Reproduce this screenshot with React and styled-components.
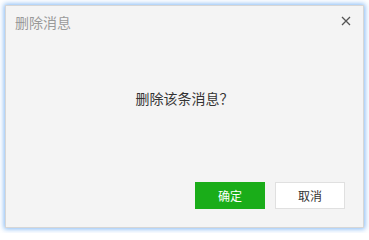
import React from 'react';
import styled, { createGlobalStyle } from 'styled-components';

const GlobalStyle = createGlobalStyle`
  html, body {
    margin: 0;
    padding: 0;
    background: #ffffff;
  }
  body {
    font-family: "Microsoft YaHei", "Noto Sans CJK SC", "Noto Sans", sans-serif;
  }
`;

const Page = styled.div`
  padding: 5px;
`;

const Dialog = styled.div`
  width: 359px;
  height: 223px;
  box-sizing: border-box;
  background-color: #f4f4f4;
  border: 1px solid #d6d6d6;
  box-shadow: 0 0 5px 1px rgba(90, 160, 240, 0.75);
  display: flex;
  flex-direction: column;
`;

const Header = styled.div`
  height: 32px;
  display: flex;
  align-items: center;
  justify-content: space-between;
  padding: 0 9px 0 9px;
  box-sizing: border-box;
`;

const Title = styled.span`
  font-size: 14px;
  color: #9a9a9a;
  line-height: 20px;
  margin-top: -1px;
`;

const CloseButton = styled.button`
  border: none;
  background: none;
  padding: 0;
  width: 16px;
  height: 16px;
  display: flex;
  align-items: center;
  justify-content: center;
  cursor: pointer;
  margin-top: -2px;
`;

const Body = styled.div`
  flex: 1;
  display: flex;
  justify-content: center;
  padding-top: 50px;
`;

const Message = styled.p`
  margin: 0;
  font-size: 14px;
  line-height: 20px;
  color: #333333;
`;

const Footer = styled.div`
  display: flex;
  justify-content: flex-end;
  gap: 10px;
  padding: 0 18px 18px 0;
`;

const Button = styled.button`
  width: 70px;
  height: 27px;
  box-sizing: border-box;
  font-family: inherit;
  font-size: 12px;
  cursor: pointer;
  border: 1px solid ${p => (p.$primary ? '#1aad19' : '#e0e0e0')};
  background-color: ${p => (p.$primary ? '#1aad19' : '#ffffff')};
  color: ${p => (p.$primary ? '#ffffff' : '#333333')};
  padding: 0;
`;

const App = () => {
  return (
    <>
      <GlobalStyle />
      <Page>
        <Dialog>
          <Header>
            <Title>删除消息</Title>
            <CloseButton aria-label="关闭">
              <svg width="10" height="10" viewBox="0 0 10 10">
                <path d="M1 1 L9 9 M9 1 L1 9" stroke="#555" strokeWidth="1.3" />
              </svg>
            </CloseButton>
          </Header>
          <Body>
            <Message>删除该条消息？</Message>
          </Body>
          <Footer>
            <Button $primary>确定</Button>
            <Button>取消</Button>
          </Footer>
        </Dialog>
      </Page>
    </>
  );
};

export default App;
